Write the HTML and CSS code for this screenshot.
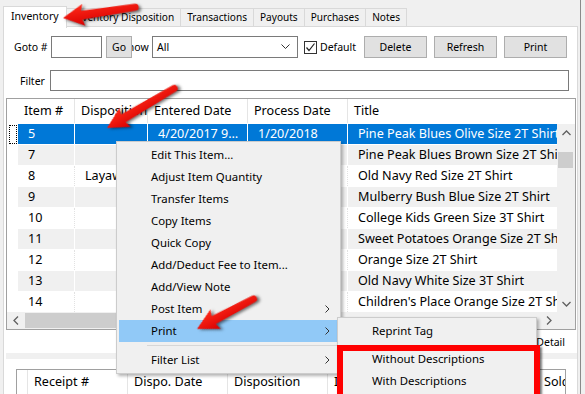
FILE: index.html
```html
<!DOCTYPE html>
<html lang="en">
<head>
  <meta charset="UTF-8">
  <meta name="viewport" content="width=device-width, initial-scale=1.0">
  <title>Inventory</title>
  <link rel="stylesheet" href="styles.css">
</head>
<body>
  <div class="window">
    <div class="main">
      <div class="tabs">
        <div class="tab active">Inventory</div>
        <div class="tab">Inventory Disposition</div>
        <div class="tab">Transactions</div>
        <div class="tab">Payouts</div>
        <div class="tab">Purchases</div>
        <div class="tab">Notes</div>
      </div>

      <div class="panel">
        <!-- barra de herramientas -->
        <div class="toolbar">
          <span class="lbl goto">Goto #</span>
          <input class="txt goto-box" type="text">
          <button class="btn go">Go</button>
          <span class="lbl show">Show</span>
          <div class="select">
            <span>All</span>
            <svg width="9" height="6" viewBox="0 0 9 6"><polyline points="0.5,0.5 4.5,4.5 8.5,0.5" fill="none" stroke="#333" stroke-width="1"/></svg>
          </div>
          <label class="check">
            <span class="box"><svg width="11" height="11" viewBox="0 0 11 11"><polyline points="1.5,5.5 4,8.5 9.5,1.5" fill="none" stroke="#222" stroke-width="1.2"/></svg></span>
            Default
          </label>
          <button class="btn wide delete">Delete</button>
          <button class="btn wide">Refresh</button>
          <button class="btn wide">Print</button>
        </div>

        <div class="filter-row">
          <span class="lbl filter">Filter</span>
          <input class="txt filter-box" type="text">
        </div>

        <!-- tabla de inventario -->
        <div class="grid">
          <div class="grid-head">
            <div class="rh"></div>
            <div class="hc c-item">Item #</div>
            <div class="hc c-disp">Disposition</div>
            <div class="hc c-ent">Entered Date</div>
            <div class="hc c-proc">Process Date</div>
            <div class="hc c-title">Title</div>
          </div>
          <div class="grid-body">
            <div class="rows">
              <div class="row sel">
                <div class="rh"><span class="focus"></span></div>
                <div class="c c-item">5</div>
                <div class="c c-disp"></div>
                <div class="c c-ent">4/20/2017 9:41 AM</div>
                <div class="c c-proc">1/20/2018</div>
                <div class="c c-title">Pine Peak Blues Olive Size 2T Shirt</div>
              </div>
              <div class="row alt">
                <div class="rh"></div>
                <div class="c c-item">7</div>
                <div class="c c-disp"></div>
                <div class="c c-ent">4/20/2017 9:41 AM</div>
                <div class="c c-proc">1/20/2018</div>
                <div class="c c-title">Pine Peak Blues Brown Size 2T Shirt</div>
              </div>
              <div class="row">
                <div class="rh"></div>
                <div class="c c-item">8</div>
                <div class="c c-disp">Layaway</div>
                <div class="c c-ent">4/20/2017 9:42 AM</div>
                <div class="c c-proc">1/20/2018</div>
                <div class="c c-title">Old Navy Red Size 2T Shirt</div>
              </div>
              <div class="row alt">
                <div class="rh"></div>
                <div class="c c-item">9</div>
                <div class="c c-disp"></div>
                <div class="c c-ent">4/20/2017 9:42 AM</div>
                <div class="c c-proc">1/20/2018</div>
                <div class="c c-title">Mulberry Bush Blue Size 2T Shirt</div>
              </div>
              <div class="row">
                <div class="rh"></div>
                <div class="c c-item">10</div>
                <div class="c c-disp"></div>
                <div class="c c-ent">4/20/2017 9:43 AM</div>
                <div class="c c-proc">1/20/2018</div>
                <div class="c c-title">College Kids Green Size 3T Shirt</div>
              </div>
              <div class="row alt">
                <div class="rh"></div>
                <div class="c c-item">11</div>
                <div class="c c-disp"></div>
                <div class="c c-ent">4/20/2017 9:43 AM</div>
                <div class="c c-proc">1/20/2018</div>
                <div class="c c-title">Sweet Potatoes Orange Size 2T Shirt</div>
              </div>
              <div class="row">
                <div class="rh"></div>
                <div class="c c-item">12</div>
                <div class="c c-disp"></div>
                <div class="c c-ent">4/20/2017 9:44 AM</div>
                <div class="c c-proc">1/20/2018</div>
                <div class="c c-title">Orange Size 2T Shirt</div>
              </div>
              <div class="row alt">
                <div class="rh"></div>
                <div class="c c-item">13</div>
                <div class="c c-disp"></div>
                <div class="c c-ent">4/20/2017 9:44 AM</div>
                <div class="c c-proc">1/20/2018</div>
                <div class="c c-title">Old Navy White Size 3T Shirt</div>
              </div>
              <div class="row">
                <div class="rh"></div>
                <div class="c c-item">14</div>
                <div class="c c-disp"></div>
                <div class="c c-ent">4/20/2017 9:45 AM</div>
                <div class="c c-proc">1/20/2018</div>
                <div class="c c-title">Children's Place Orange Size 2T Shirt</div>
              </div>
            </div>
            <div class="vscroll">
              <div class="sb-btn"><svg width="9" height="6" viewBox="0 0 9 6"><polyline points="0.5,5 4.5,1 8.5,5" fill="none" stroke="#606060" stroke-width="1.3"/></svg></div>
              <div class="vtrack"><div class="vthumb"></div></div>
              <div class="sb-btn"><svg width="9" height="6" viewBox="0 0 9 6"><polyline points="0.5,1 4.5,5 8.5,1" fill="none" stroke="#606060" stroke-width="1.3"/></svg></div>
            </div>
          </div>
          <div class="hscroll">
            <div class="sb-btn h"><svg width="6" height="9" viewBox="0 0 6 9"><polyline points="5,0.5 1,4.5 5,8.5" fill="none" stroke="#606060" stroke-width="1.3"/></svg></div>
            <div class="htrack"><div class="hthumb"></div></div>
            <div class="sb-btn h"><svg width="6" height="9" viewBox="0 0 6 9"><polyline points="1,0.5 5,4.5 1,8.5" fill="none" stroke="#606060" stroke-width="1.3"/></svg></div>
            <div class="corner"></div>
          </div>
        </div>

        <div class="detail-row">
          <span class="box small"></span>
          <span>Show Detail</span>
        </div>
        <div class="splitter"></div>

        <!-- tabla de recibos -->
        <div class="grid2">
          <div class="grid-head">
            <div class="rh2"></div>
            <div class="hc c-r">Receipt #</div>
            <div class="hc c-r">Dispo. Date</div>
            <div class="hc c-r">Disposition</div>
            <div class="hc c-r">Item #</div>
            <div class="hc c-r2">Amount</div>
            <div class="hc c-sold">Sold To</div>
          </div>
        </div>
      </div>
    </div>
    <div class="edge"></div>
  </div>

  <!-- menú contextual -->
  <div class="menu">
    <div class="mi">Edit This Item...</div>
    <div class="mi">Adjust Item Quantity</div>
    <div class="mi">Transfer Items</div>
    <div class="mi">Copy Items</div>
    <div class="mi">Quick Copy</div>
    <div class="mi">Add/Deduct Fee to Item...</div>
    <div class="mi">Add/View Note</div>
    <div class="mi sub">Post Item<svg width="5" height="8" viewBox="0 0 5 8"><polyline points="0.5,0.5 4,4 0.5,7.5" fill="none" stroke="#333" stroke-width="1"/></svg></div>
    <div class="mi sub hover">Print<svg width="5" height="8" viewBox="0 0 5 8"><polyline points="0.5,0.5 4,4 0.5,7.5" fill="none" stroke="#333" stroke-width="1"/></svg></div>
    <div class="msep"></div>
    <div class="mi sub">Filter List<svg width="5" height="8" viewBox="0 0 5 8"><polyline points="0.5,0.5 4,4 0.5,7.5" fill="none" stroke="#333" stroke-width="1"/></svg></div>
  </div>

  <div class="menu submenu">
    <div class="mi">Reprint Tag</div>
    <div class="msep"></div>
    <div class="mi">Without Descriptions</div>
    <div class="mi">With Descriptions</div>
  </div>

  <div class="callout"></div>

  <!-- flechas rojas -->
  <svg class="arrows" width="585" height="394" viewBox="0 0 585 394">
    <defs>
      <linearGradient id="red" x1="0" y1="0" x2="0" y2="1">
        <stop offset="0" stop-color="#ff2a1a"/>
        <stop offset="1" stop-color="#d80000"/>
      </linearGradient>
    </defs>
    <g class="arrow" transform="translate(63,18) rotate(-8.5)">
      <path d="M0,0 L21,-11 L19,-4.5 L73,-3.5 A3.5,3.5 0 0 1 73,3.5 L19,4.5 L21,11 Z" fill="url(#red)"/>
    </g>
    <g class="arrow" transform="translate(107,128) rotate(-30.5)">
      <path d="M0,0 L21,-11 L19,-4.5 L78,-3.5 A3.5,3.5 0 0 1 78,3.5 L19,4.5 L21,11 Z" fill="url(#red)"/>
    </g>
    <g class="arrow" transform="translate(197,329) rotate(-28)">
      <path d="M0,0 L21,-11 L19,-4.5 L64,-3.5 A3.5,3.5 0 0 1 64,3.5 L19,4.5 L21,11 Z" fill="url(#red)"/>
    </g>
  </svg>
</body>
</html>
```

FILE: styles.css
```css
* {
  box-sizing: border-box;
}

body {
  margin: 0;
  width: 585px;
  height: 394px;
  overflow: hidden;
  position: relative;
  background-color: #f0f0f0;
  font-family: "Noto Sans", sans-serif;
  font-size: 10.5px;
  color: #000;
}

.window {
  display: flex;
  height: 100%;
}

.main {
  width: 580px;
  padding: 6px 2px 0 3px;
  display: flex;
  flex-direction: column;
}

.edge {
  width: 1px;
  background-color: #8a8a8a;
}

/* Pestañas */
.tabs {
  display: flex;
  align-items: flex-end;
  height: 20px;
  position: relative;
  z-index: 1;
  font-size: 10.1px;
}

.tab {
  height: 18px;
  line-height: 17px;
  padding: 0 6px;
  border: 1px solid #d9d9d9;
  border-bottom: none;
  margin-left: -1px;
  background-color: #f0f0f0;
  white-space: nowrap;
}

.tab.active {
  height: 22px;
  line-height: 19px;
  margin: 0 0 -2px 0;
  padding: 0 7px;
  background-color: #fff;
  position: relative;
  z-index: 2;
  font-size: 10.5px;
}

.panel {
  flex: 1;
  background-color: #fff;
  border: 1px solid #d9d9d9;
  display: flex;
  flex-direction: column;
}

/* Barra superior */
.toolbar {
  display: flex;
  align-items: center;
  height: 22px;
  margin: 9px 0 0 10px;
}

.lbl {
  white-space: nowrap;
}

.goto {
  width: 37px;
}

.txt {
  height: 22px;
  border: 1px solid #7a7a7a;
  background-color: #fff;
  padding: 0 3px;
  font: inherit;
  margin: 0;
}

.goto-box {
  width: 51px;
}

.btn {
  height: 22px;
  border: 1px solid #adadad;
  background-color: #e1e1e1;
  font: inherit;
  color: #000;
  padding: 0;
  margin: 0;
}

.go {
  width: 26px;
  margin-left: 4px;
  position: relative;
  z-index: 1;
}

.show {
  width: 29px;
  margin-left: -10px;
}

.select {
  width: 146px;
  height: 22px;
  margin-left: 1px;
  border: 1px solid #7a7a7a;
  display: flex;
  align-items: center;
  justify-content: space-between;
  padding: 0 7px 0 4px;
}

.check {
  display: flex;
  align-items: center;
  width: 60px;
  margin-left: 6px;
}

.box {
  width: 13px;
  height: 13px;
  border: 1px solid #333;
  background-color: #fff;
  margin-right: 3px;
  display: flex;
  align-items: center;
  justify-content: center;
}

.wide {
  width: 63px;
  margin-left: 7px;
}

.delete {
  margin-left: 0;
}

.filter-row {
  display: flex;
  align-items: center;
  margin: 12px 0 0 16px;
}

.filter {
  width: 30px;
}

.filter-box {
  width: 519px;
  height: 21px;
}

/* Tabla principal */
.grid {
  width: 570px;
  height: 232px;
  margin: 7px 0 0 2px;
  border: 1px solid #a0a0a0;
  display: flex;
  flex-direction: column;
  font-size: 12.6px;
}

.grid-head {
  display: flex;
  height: 25px;
  padding-bottom: 1px;
  align-items: stretch;
  flex-shrink: 0;
}

.hc {
  padding-left: 6px;
  line-height: 23px;
  white-space: nowrap;
  overflow: hidden;
}

.grid-head .hc + .hc {
  border-left: 1px solid #e5e5e5;
}

.rh {
  width: 11px;
  flex-shrink: 0;
  display: flex;
  align-items: center;
  justify-content: center;
  padding-left: 1px;
}

.c-item { width: 56px; }
.c-disp { width: 73px; }
.c-ent { width: 100px; }
.c-proc { width: 100px; }
.c-title { width: 210px; }

.grid-head .c-title {
  flex: 1;
}

.grid-body {
  display: flex;
  height: 188px;
  overflow: hidden;
}

.rows {
  width: 550px;
}

.row {
  display: flex;
  height: 21px;
  border-bottom: 1px solid #fff;
}

.c {
  flex-shrink: 0;
  padding-left: 10px;
  line-height: 20px;
  white-space: nowrap;
  overflow: hidden;
}

.row .c + .c {
  border-left: 1px dotted #e2e2e2;
}

.row.alt .c {
  background-color: #f0f0f0;
}

.row.alt .c + .c,
.row.sel .c + .c {
  border-left: 1px solid #fff;
}

.row.sel .c {
  background-color: #0078d7;
  color: #fff;
}

.c-ent {
  text-overflow: ellipsis;
  padding-right: 6px;
}

.focus {
  width: 8px;
  height: 19px;
  border: 1px dotted #000;
}

.vscroll {
  width: 18px;
  background-color: #f0f0f0;
  display: flex;
  flex-direction: column;
}

.sb-btn {
  height: 17px;
  display: flex;
  align-items: center;
  justify-content: center;
  flex-shrink: 0;
}

.vtrack {
  flex: 1;
}

.vthumb {
  height: 16px;
  margin: 11px 2px 0 1px;
  background-color: #cdcdcd;
}

.hscroll {
  display: flex;
  height: 17px;
  background-color: #f0f0f0;
}

.sb-btn.h {
  width: 17px;
}

.htrack {
  flex: 1;
  display: flex;
  align-items: center;
}

.hthumb {
  width: 300px;
  height: 15px;
  margin-left: 1px;
  background-color: #cdcdcd;
}

.corner {
  width: 18px;
}

.detail-row {
  height: 23px;
  display: flex;
  align-items: center;
  justify-content: flex-end;
  padding-right: 12px;
}

.box.small {
  width: 13px;
  height: 13px;
}

.splitter {
  height: 6px;
  margin-left: 2px;
  background-color: #f0f0f0;
}

/* Tabla inferior */
.grid2 {
  width: 550px;
  height: 40px;
  margin: 10px 0 0 12px;
  border: 1px solid #a0a0a0;
  font-size: 12.6px;
}

.rh2 {
  width: 10px;
}

.c-r { width: 100px; }
.c-r2 { width: 110px; }
.c-sold { flex: 1; }

.grid2 .grid-head .hc {
  border-left: 1px solid #e5e5e5;
}

/* Menú contextual */
.menu {
  position: absolute;
  left: 116px;
  top: 141px;
  width: 225px;
  padding: 2px;
  background-color: #f0f0f0;
  border: 1px solid #cccccc;
  box-shadow: 2px 2px 3px rgba(0, 0, 0, 0.3);
  font-size: 11.4px;
  z-index: 5;
}

.mi {
  height: 22px;
  line-height: 22px;
  padding: 0 8px 0 32px;
  display: flex;
  align-items: center;
  justify-content: space-between;
  white-space: nowrap;
}

.mi.hover {
  background-color: #91c9f7;
}

.msep {
  height: 7px;
  margin-left: 28px;
  border-top: 3px solid transparent;
  border-bottom: 3px solid transparent;
  background-color: #d7d7d7;
  background-clip: content-box;
}

.submenu {
  left: 337px;
  top: 317px;
  width: 200px;
  z-index: 6;
}

.submenu .msep {
  height: 6px;
}

.callout {
  position: absolute;
  left: 337px;
  top: 345px;
  width: 203px;
  height: 70px;
  border: 6px solid #ff0000;
  box-shadow: 2px 2px 2px rgba(0, 0, 0, 0.5);
  z-index: 7;
}

.arrows {
  position: absolute;
  left: 0;
  top: 0;
  z-index: 8;
  pointer-events: none;
}

.arrow {
  filter: drop-shadow(2px 2px 1.5px rgba(0, 0, 0, 0.55));
}
```
